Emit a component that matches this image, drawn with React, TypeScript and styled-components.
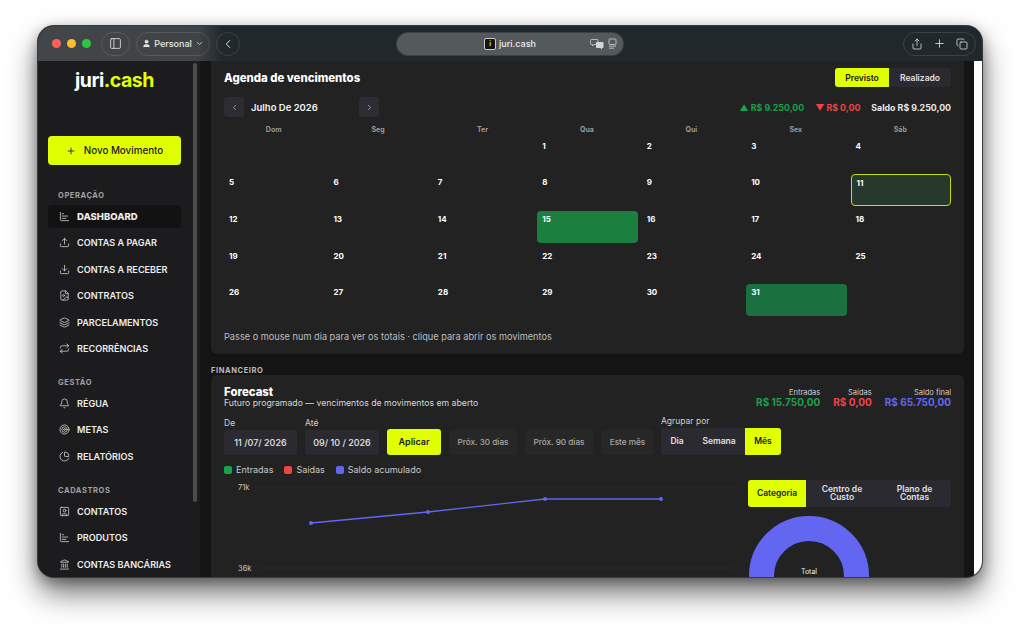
import React from 'react';
import styled, { createGlobalStyle } from 'styled-components';
import {
  Bell, ChartBar, ChevronDown, ChevronLeft, ChevronRight, Copy, Download,
  FileImage, Landmark, Layers, PanelLeft, PieChart, Plus, Repeat, Share, SquareUser, Target, Upload, User, type LucideIcon,
} from 'lucide-react';

const GlobalStyle = createGlobalStyle`
  html, body { margin: 0; padding: 0; background: #fff; overflow: hidden; }
  body { font-family: Inter, "Liberation Sans", sans-serif; }
  * { box-sizing: border-box; }
`;

const LIME = '#e0ff00';
const GREEN = '#16a34a';
const RED = '#ef4444';
const INDIGO = '#6366f1';

const Page = styled.div`
  width: 1020px;
  height: 628px;
  padding: 26px 38px 51px;
  background: #fff;
`;

const Window = styled.div`
  height: 551px;
  display: flex;
  flex-direction: column;
  border-radius: 16px;
  overflow: hidden;
  background: #141414;
  box-shadow: 0 0 0 1px #3a3a3a, 0 16px 30px rgba(0, 0, 0, 0.55), 0 4px 14px rgba(0, 0, 0, 0.35);
`;

const TitleBar = styled.div`
  height: 35px;
  flex: none;
  display: flex;
  align-items: center;
  padding: 0 6px 0 14px;
  background: linear-gradient(90deg, #434648 0, #3f4345 160px, #20282c 185px, #20282c 100%);
`;

const Lights = styled.div`
  display: flex;
  gap: 6px;
  margin-right: 10px;
`;

const Light = styled.span<{ $color: string }>`
  width: 9px;
  height: 9px;
  border-radius: 50%;
  background: ${(p) => p.$color};
`;

const Pill = styled.div<{ $w: number; $ml?: number }>`
  width: ${(p) => p.$w}px;
  height: 24px;
  margin-left: ${(p) => p.$ml ?? 0}px;
  flex: none;
  display: flex;
  align-items: center;
  justify-content: center;
  gap: 3px;
  border: 1px solid rgba(255, 255, 255, 0.12);
  border-radius: 12px;
  color: #e6e6e6;
  font-size: 9px;
  font-weight: 500;
`;

const AddressBar = styled.div`
  width: 226px;
  height: 22px;
  margin-left: 157px;
  flex: none;
  position: relative;
  display: flex;
  align-items: center;
  justify-content: center;
  gap: 3px;
  background: #54595c;
  border-radius: 11px;
  box-shadow: 0 0 0 1px #3a4144;
  color: #eee;
  font-size: 9px;
  font-weight: 500;
`;

const Favicon = styled.span`
  width: 12px;
  height: 12px;
  display: flex;
  align-items: center;
  justify-content: center;
  background: #141414;
  border: 1px solid #ccc;
  border-radius: 2px;
  color: ${LIME};
  font-size: 6px;
  font-weight: 700;
`;

const AddressIcons = styled.div`
  position: absolute;
  right: 6px;
  top: 5px;
  display: flex;
  gap: 4px;
  color: #d4d6d7;
`;

const Actions = styled(Pill)`
  margin-left: auto;
  gap: 10px;
`;

const Body = styled.div`
  flex: 1;
  min-height: 0;
  display: flex;
`;

const Sidebar = styled.aside`
  width: 162px;
  flex: none;
  position: relative;
  overflow: hidden;
  background: #1c1c1e;
  padding: 0 19px 0 10px;
`;

const SideThumb = styled.div`
  position: absolute;
  left: 155px;
  top: 2px;
  width: 4px;
  height: 439px;
  border-radius: 2px;
  background: #4c4c4c;
`;

const Logo = styled.div`
  height: 75px;
  padding-top: 5px;
  text-align: center;
  color: #fff;
  font-size: 19.5px;
  font-weight: 700;
  letter-spacing: -0.5px;
  line-height: 28px;
`;

const LogoAccent = styled.span`
  color: ${LIME};
`;

const NewButton = styled.button`
  width: 133px;
  height: 29px;
  display: flex;
  align-items: center;
  justify-content: center;
  gap: 8px;
  border: 0;
  border-radius: 4px;
  background: ${LIME};
  color: #1a1a1a;
  font: 500 9.8px Inter, sans-serif;
`;

const Section = styled.div<{ $mt: number }>`
  margin-top: ${(p) => p.$mt}px;
`;

const SectionLabel = styled.div`
  height: 12px;
  padding-left: 10px;
  margin-bottom: 3px;
  color: #a0a0a0;
  font-size: 7.5px;
  font-weight: 700;
  letter-spacing: 0.6px;
  line-height: 12px;
`;

const NavItem = styled.div<{ $active?: boolean }>`
  width: 133px;
  height: 23px;
  margin-bottom: 3.4px;
  display: flex;
  align-items: center;
  gap: 7px;
  padding-left: 11px;
  border-radius: 4px;
  background: ${(p) => (p.$active ? '#121212' : 'transparent')};
  color: #ececec;
  font-size: ${(p) => (p.$active ? 9.5 : 9.1)}px;
  font-weight: ${(p) => (p.$active ? 800 : 600)};
  white-space: nowrap;
  svg { color: #e0e0e0; flex: none; }
`;

const Main = styled.main`
  width: 774px;
  flex: none;
  padding: 0 10px 0 11px;
  overflow: hidden;
`;

const Gutter = styled.div`
  flex: 1;
  background: #fff;
`;

const Panel = styled.section<{ $flat?: boolean }>`
  padding: 7px 13px 11px;
  background: #222222;
  border-radius: ${(p) => (p.$flat ? '0 0 6px 6px' : '6px')};
`;

const PanelHead = styled.div`
  display: flex;
  align-items: center;
  justify-content: space-between;
  height: 19px;
`;

const PanelTitle = styled.h2`
  margin: 0;
  color: #fff;
  font-size: 11.4px;
  font-weight: 800;
`;

const Segments = styled.div`
  display: flex;
  border-radius: 3px;
  overflow: hidden;
  background: #2a2a30;
`;

const Segment = styled.div<{ $w: number; $on?: boolean; $h?: number }>`
  width: ${(p) => p.$w}px;
  height: ${(p) => p.$h ?? 19}px;
  padding: 0 10px;
  display: flex;
  align-items: center;
  justify-content: center;
  text-align: center;
  background: ${(p) => (p.$on ? LIME : 'transparent')};
  color: ${(p) => (p.$on ? '#1a1a1a' : '#e0e0e0')};
  font-size: 8.5px;
  font-weight: 600;
  line-height: 8px;
`;

const MonthRow = styled.div`
  display: flex;
  align-items: center;
  height: 20px;
  margin-top: 10px;
`;

const MonthButton = styled.div`
  width: 20px;
  height: 20px;
  display: flex;
  align-items: center;
  justify-content: center;
  background: #2c2c32;
  border-radius: 3px;
  color: #bbb;
`;

const MonthName = styled.div`
  width: 115px;
  padding-left: 7px;
  color: #f2f2f2;
  font-size: 9.5px;
  font-weight: 600;
`;

const Totals = styled.div`
  margin-left: auto;
  display: flex;
  gap: 11px;
  font-size: 8.8px;
  font-weight: 700;
`;

const Tone = styled.span<{ $c: string }>`
  color: ${(p) => p.$c};
`;

const WeekDays = styled.div`
  display: grid;
  grid-template-columns: repeat(7, 1fr);
  column-gap: 4px;
  margin-top: 7px;
  height: 12px;
`;

const WeekDay = styled.div`
  text-align: center;
  color: #999;
  font-size: 7px;
  font-weight: 700;
  line-height: 12px;
  padding-right: 1px;
`;

const Days = styled.div`
  display: grid;
  grid-template-columns: repeat(7, 1fr);
  grid-auto-rows: 32px;
  gap: 4.7px 4px;
  margin-top: 1.5px;
`;

const Day = styled.div<{ $bg?: string; $today?: boolean }>`
  padding: 3px 5px;
  border-radius: 4px;
  background: ${(p) => p.$bg ?? 'transparent'};
  border: ${(p) => (p.$today ? '1px solid #c4de06' : '0')};
  color: #fff;
  font-size: 8px;
  font-weight: 700;
  line-height: 10px;
`;

const CalendarHint = styled.div`
  margin-top: 14.5px;
  color: #bdbdbd;
  font-size: 9.2px;
  line-height: 12px;
`;

const GroupLabel = styled.div`
  height: 21px;
  padding-top: 11px;
  color: #bbb;
  font-size: 7.5px;
  font-weight: 700;
  letter-spacing: 0.6px;
  line-height: 11px;
`;

const ForecastPanel = styled(Panel)`
  height: 300px;
  padding-top: 11px;
`;

const ForecastHead = styled.div`
  display: flex;
  justify-content: space-between;
  height: 35px;
`;

const ForecastTitle = styled.div`
  color: #fff;
  font-size: 11.4px;
  font-weight: 800;
  line-height: 12px;
`;

const Subtitle = styled.div`
  color: #d8d8d8;
  font-size: 8.7px;
  line-height: 10px;
`;

const Stats = styled.div`
  display: flex;
  gap: 13px;
  margin-top: 3px;
`;

const Stat = styled.div`
  text-align: right;
`;

const StatLabel = styled.div`
  color: #cfcfcf;
  font-size: 7.5px;
  line-height: 8px;
`;

const StatValue = styled.div<{ $c: string }>`
  color: ${(p) => p.$c};
  font-size: 10px;
  font-weight: 700;
  line-height: 10px;
`;

const Filters = styled.div`
  display: flex;
  align-items: flex-end;
  gap: 8px;
  height: 34px;
`;

const Field = styled.div<{ $w: number }>`
  width: ${(p) => p.$w}px;
`;

const FieldLabel = styled.div`
  color: #cfcfcf;
  font-size: 8.5px;
  line-height: 9px;
  margin-bottom: 2px;
`;

const DateInput = styled.div`
  height: 25px;
  display: flex;
  align-items: center;
  justify-content: center;
  background: #2a2a30;
  border-radius: 3px;
  color: #e4e4e4;
  font-size: 9px;
  font-weight: 500;
  white-space: pre;
`;

const ApplyButton = styled.div`
  width: 54px;
  height: 26px;
  display: flex;
  align-items: center;
  justify-content: center;
  background: ${LIME};
  border-radius: 3px;
  color: #1a1a1a;
  font-size: 9px;
  font-weight: 600;
`;

const GhostButton = styled.div<{ $w: number }>`
  width: ${(p) => p.$w}px;
  height: 25px;
  display: flex;
  align-items: center;
  justify-content: center;
  background: #272727;
  border-radius: 3px;
  color: #a8a8a8;
  font-size: 8.2px;
  font-weight: 500;
`;

const GroupField = styled.div`
  display: flex;
  flex-direction: column;
  margin-left: -1px;
  margin-top: -7px;
`;

const Legend = styled.div`
  display: flex;
  gap: 11px;
  height: 12px;
  margin-top: 9px;
`;

const LegendItem = styled.div`
  display: flex;
  align-items: center;
  gap: 4px;
  color: #c8c8c8;
  font-size: 9px;
`;

const Swatch = styled.span<{ $c: string }>`
  width: 8px;
  height: 8px;
  border-radius: 2px;
  background: ${(p) => p.$c};
`;

const ChartRow = styled.div`
  display: flex;
  justify-content: space-between;
  margin-top: 4px;
`;

const Chart = styled.svg`
  width: 510px;
  height: 110px;
  flex: none;
  font-family: Inter, sans-serif;
`;

const Side = styled.div`
  width: 203px;
`;

const DonutBox = styled.div`
  position: relative;
  width: 120px;
  height: 120px;
  margin: 9px 0 0 1px;
`;

const DonutLabel = styled.div`
  position: absolute;
  left: 0;
  right: 0;
  top: 51px;
  text-align: center;
  color: #eee;
  font-size: 7px;
`;

const navGroups: { label: string; mt: number; items: { text: string; icon: LucideIcon; active?: boolean }[] }[] = [
  {
    label: 'OPERAÇÃO', mt: 25, items: [
      { text: 'DASHBOARD', icon: ChartBar, active: true },
      { text: 'CONTAS A PAGAR', icon: Upload },
      { text: 'CONTAS A RECEBER', icon: Download },
      { text: 'CONTRATOS', icon: FileImage },
      { text: 'PARCELAMENTOS', icon: Layers },
      { text: 'RECORRÊNCIAS', icon: Repeat },
    ],
  },
  {
    label: 'GESTÃO', mt: 17, items: [
      { text: 'RÉGUA', icon: Bell },
      { text: 'METAS', icon: Target },
      { text: 'RELATÓRIOS', icon: PieChart },
    ],
  },
  {
    label: 'CADASTROS', mt: 17, items: [
      { text: 'CONTATOS', icon: SquareUser },
      { text: 'PRODUTOS', icon: ChartBar },
      { text: 'CONTAS BANCÁRIAS', icon: Landmark },
    ],
  },
];

const weekDays = ['Dom', 'Seg', 'Ter', 'Qua', 'Qui', 'Sex', 'Sáb'];
const cells: (number | null)[] = [null, null, null, ...Array.from({ length: 31 }, (_, i) => i + 1)];
const dayBg: Record<number, string> = { 11: '#26392c', 15: '#1b7f40', 31: '#1b7040' };
const points = [[87, 43], [204, 32], [321, 19], [437, 19]];

const TranslateIcon = () => (
  <svg width="14" height="12" viewBox="0 0 14 12">
    <path d="M1.5 1.5h5.5a1 1 0 0 1 1 1v3a1 1 0 0 1-1 1H4L2.5 8V6.5h-1a1 1 0 0 1-1-1v-3a1 1 0 0 1 1-1z" fill="none" stroke="currentColor" strokeWidth="0.8" />
    <path d="M7 4h5.5a1 1 0 0 1 1 1v4a1 1 0 0 1-1 1h-.5v1.5L10.300 10H7a1 1 0 0 1-1-1V5a1 1 0 0 1 1-1z" fill="currentColor" />
  </svg>
);

const ReaderIcon = () => (
  <svg width="9" height="12" viewBox="0 0 9 12" fill="none" stroke="currentColor" strokeWidth="0.8">
    <rect x="1" y="1" width="7" height="5.500" rx="0.8" />
    <path d="M1 8.200h7M1 10.200h5" />
  </svg>
);

const App = () => (
  <>
    <GlobalStyle />
    <Page>
      <Window>
        <TitleBar>
          <Lights>
            <Light $color="#ff5f57" />
            <Light $color="#febc2e" />
            <Light $color="#28c840" />
          </Lights>
          <Pill $w={29}><PanelLeft size={13} strokeWidth={1.5} /></Pill>
          <Pill $w={74} $ml={6}>
            <User size={9} fill="currentColor" />Personal<ChevronDown size={9} />
          </Pill>
          <Pill $w={24} $ml={6}><ChevronLeft size={14} strokeWidth={1.6} /></Pill>
          <AddressBar>
            <Favicon>i</Favicon>juri.cash
            <AddressIcons>
              <TranslateIcon />
              <ReaderIcon />
            </AddressIcons>
          </AddressBar>
          <Actions $w={73}>
            <Share size={12} strokeWidth={1.5} />
            <Plus size={13} strokeWidth={1.5} />
            <Copy size={12} strokeWidth={1.5} />
          </Actions>
        </TitleBar>
        <Body>
          <Sidebar>
            <SideThumb />
            <Logo>juri<LogoAccent>.cash</LogoAccent></Logo>
            <NewButton><Plus size={10} />Novo Movimento</NewButton>
            {navGroups.map((g) => (
              <Section key={g.label} $mt={g.mt}>
                <SectionLabel>{g.label}</SectionLabel>
                {g.items.map((it) => (
                  <NavItem key={it.text} $active={it.active}>
                    <it.icon size={11} strokeWidth={1.6} />
                    {it.text}
                  </NavItem>
                ))}
              </Section>
            ))}
          </Sidebar>
          <Main>
            <Panel $flat>
              <PanelHead>
                <PanelTitle>Agenda de vencimentos</PanelTitle>
                <Segments>
                  <Segment $w={54} $on>Previsto</Segment>
                  <Segment $w={62}>Realizado</Segment>
                </Segments>
              </PanelHead>
              <MonthRow>
                <MonthButton><ChevronLeft size={9} /></MonthButton>
                <MonthName>Julho De 2026</MonthName>
                <MonthButton><ChevronRight size={9} /></MonthButton>
                <Totals>
                  <Tone $c={GREEN}>▲ R$ 9.250,00</Tone>
                  <Tone $c={RED}>▼ R$ 0,00</Tone>
                  <Tone $c="#e8e8e8">Saldo R$ 9.250,00</Tone>
                </Totals>
              </MonthRow>
              <WeekDays>
                {weekDays.map((d) => <WeekDay key={d}>{d}</WeekDay>)}
              </WeekDays>
              <Days>
                {cells.map((n, i) => (
                  <Day key={i} $bg={n ? dayBg[n] : undefined} $today={n === 11}>{n}</Day>
                ))}
              </Days>
              <CalendarHint>Passe o mouse num dia para ver os totais · clique para abrir os movimentos</CalendarHint>
            </Panel>
            <GroupLabel>FINANCEIRO</GroupLabel>
            <ForecastPanel>
              <ForecastHead>
                <div>
                  <ForecastTitle>Forecast</ForecastTitle>
                  <Subtitle>Futuro programado — vencimentos de movimentos em aberto</Subtitle>
                </div>
                <Stats>
                  <Stat><StatLabel>Entradas</StatLabel><StatValue $c={GREEN}>R$ 15.750,00</StatValue></Stat>
                  <Stat><StatLabel>Saídas</StatLabel><StatValue $c={RED}>R$ 0,00</StatValue></Stat>
                  <Stat><StatLabel>Saldo final</StatLabel><StatValue $c={INDIGO}>R$ 65.750,00</StatValue></Stat>
                </Stats>
              </ForecastHead>
              <Filters>
                <Field $w={73}><FieldLabel>De</FieldLabel><DateInput>11 /07/ 2026</DateInput></Field>
                <Field $w={74}><FieldLabel>Até</FieldLabel><DateInput>09/ 10 / 2026</DateInput></Field>
                <ApplyButton>Aplicar</ApplyButton>
                <GhostButton $w={68}>Próx. 30 dias</GhostButton>
                <GhostButton $w={68}>Próx. 90 dias</GhostButton>
                <GhostButton $w={53}>Este mês</GhostButton>
                <GroupField>
                  <FieldLabel>Agrupar por</FieldLabel>
                  <Segments>
                    <Segment $w={32} $h={27}>Dia</Segment>
                    <Segment $w={52} $h={27}>Semana</Segment>
                    <Segment $w={36} $h={27} $on>Mês</Segment>
                  </Segments>
                </GroupField>
              </Filters>
              <Legend>
                <LegendItem><Swatch $c={GREEN} />Entradas</LegendItem>
                <LegendItem><Swatch $c={RED} />Saídas</LegendItem>
                <LegendItem><Swatch $c={INDIGO} />Saldo acumulado</LegendItem>
              </Legend>
              <ChartRow>
                <Chart viewBox="0 0 510 110">
                  <line x1="34" y1="7" x2="510" y2="7" stroke="#2a2a2a" />
                  <line x1="34" y1="88" x2="510" y2="88" stroke="#2a2a2a" />
                  <text x="14" y="10" fontSize="7.5" fill="#c8c8c8">71k</text>
                  <text x="14" y="91" fontSize="7.5" fill="#c8c8c8">36k</text>
                  <polyline points={points.map((p) => p.join(',')).join(' ')} fill="none" stroke={INDIGO} strokeWidth="1.3" />
                  {points.map(([x, y]) => (
                    <circle key={x} cx={x} cy={y} r="2" fill={INDIGO} />
                  ))}
                </Chart>
                <Side>
                  <Segments>
                    <Segment $w={58} $h={27} $on>Categoria</Segment>
                    <Segment $w={72} $h={27}>Centro de Custo</Segment>
                    <Segment $w={73} $h={27}>Plano de Contas</Segment>
                  </Segments>
                  <DonutBox>
                    <svg width="120" height="120" viewBox="0 0 120 120">
                      <circle cx="60" cy="60" r="47.500" fill="none" stroke={INDIGO} strokeWidth="25" />
                    </svg>
                    <DonutLabel>Total</DonutLabel>
                  </DonutBox>
                </Side>
              </ChartRow>
            </ForecastPanel>
          </Main>
          <Gutter />
        </Body>
      </Window>
    </Page>
  </>
);

export default App;
